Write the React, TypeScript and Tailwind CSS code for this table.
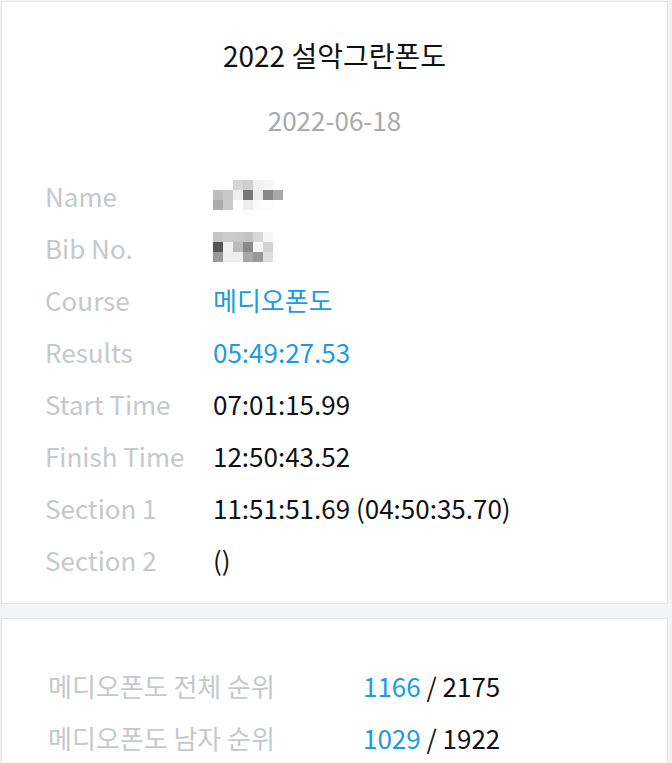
const FONT = "font-['Noto_Sans_CJK_KR','Noto_Sans',sans-serif]";

const nameCells = [
  ["bg-white", "bg-white", "bg-[#d6d6d6]", "bg-[#cfcfcf]", "bg-[#f2f2f2]", "bg-[#f6f6f6]", "bg-white"],
  ["bg-[#bdbdbd]", "bg-[#c8c8c8]", "bg-[#eeeeee]", "bg-[#777777]", "bg-[#ececec]", "bg-[#888888]", "bg-[#a8a8a8]"],
  ["bg-[#ababab]", "bg-[#cacaca]", "bg-white", "bg-[#eeeeee]", "bg-[#fafafa]", "bg-[#fcfcfc]", "bg-white"],
];

const bibCells = [
  ["bg-[#c6c6c6]", "bg-[#cbcbcb]", "bg-[#c9c9c9]", "bg-[#c4c4c4]", "bg-[#d8d8d8]", "bg-[#f5f5f5]"],
  ["bg-[#555555]", "bg-[#f0f0f0]", "bg-[#bbbbbb]", "bg-[#888888]", "bg-[#f5f5f5]", "bg-[#d2d2d2]"],
  ["bg-[#9a9a9a]", "bg-[#eeeeee]", "bg-[#eeeeee]", "bg-[#a8a8a8]", "bg-[#999999]", "bg-[#dddddd]"],
];

function Mosaic({ cells }: { cells: string[][] }) {
  return (
    <div className="flex flex-col">
      {cells.map((row, i) => (
        <div key={i} className="flex">
          {row.map((c, j) => (
            <div key={j} className={`h-[10px] w-[10px] ${c}`} />
          ))}
        </div>
      ))}
    </div>
  );
}

function Row({ label, children }: { label: string; children: React.ReactNode }) {
  return (
    <div className="flex h-[52px] items-center">
      <div className="w-[168px] shrink-0 text-[#c5c8cc]">{label}</div>
      <div className="text-[#111]">{children}</div>
    </div>
  );
}

export default function App() {
  return (
    <div className={`min-h-screen bg-[#f3f4f6] pl-[1px] pr-[4px] pt-[1px] ${FONT} text-[26px]`}>
      <div className="border border-[#e2e5e9] bg-white pb-[18px] pl-[43px]">
        <h1 className="pt-[27px] pr-[43px] text-center text-[28px] leading-[52px] text-[#111]">2022 설악그란폰도</h1>
        <div className="mt-[13px] pr-[43px] text-center leading-[52px] text-[#aaaaaa]">2022-06-18</div>
        <div className="mt-[23px]">
          <Row label="Name">
            <Mosaic cells={nameCells} />
          </Row>
          <Row label="Bib No.">
            <Mosaic cells={bibCells} />
          </Row>
          <Row label="Course">
            <span className="text-[#1a9be6]">메디오폰도</span>
          </Row>
          <Row label="Results">
            <span className="text-[#1a9be6]">05:49:27.53</span>
          </Row>
          <Row label="Start Time">07:01:15.99</Row>
          <Row label="Finish Time">12:50:43.52</Row>
          <Row label="Section 1">11:51:51.69 (04:50:35.70)</Row>
          <Row label="Section 2">()</Row>
        </div>
      </div>
      <div className="mt-[14px] border border-[#e2e5e9] bg-white pl-[46px] pt-[40px]">
        <div className="flex h-[52px] items-center">
          <div className="w-[315px] shrink-0 text-[#c5c8cc]">메디오폰도 전체 순위</div>
          <div className="text-[#111]">
            <span className="text-[#1a9be6]">1166</span> / 2175
          </div>
        </div>
        <div className="flex h-[52px] items-center">
          <div className="w-[315px] shrink-0 text-[#c5c8cc]">메디오폰도 남자 순위</div>
          <div className="text-[#111]">
            <span className="text-[#1a9be6]">1029</span> / 1922
          </div>
        </div>
      </div>
    </div>
  );
}
